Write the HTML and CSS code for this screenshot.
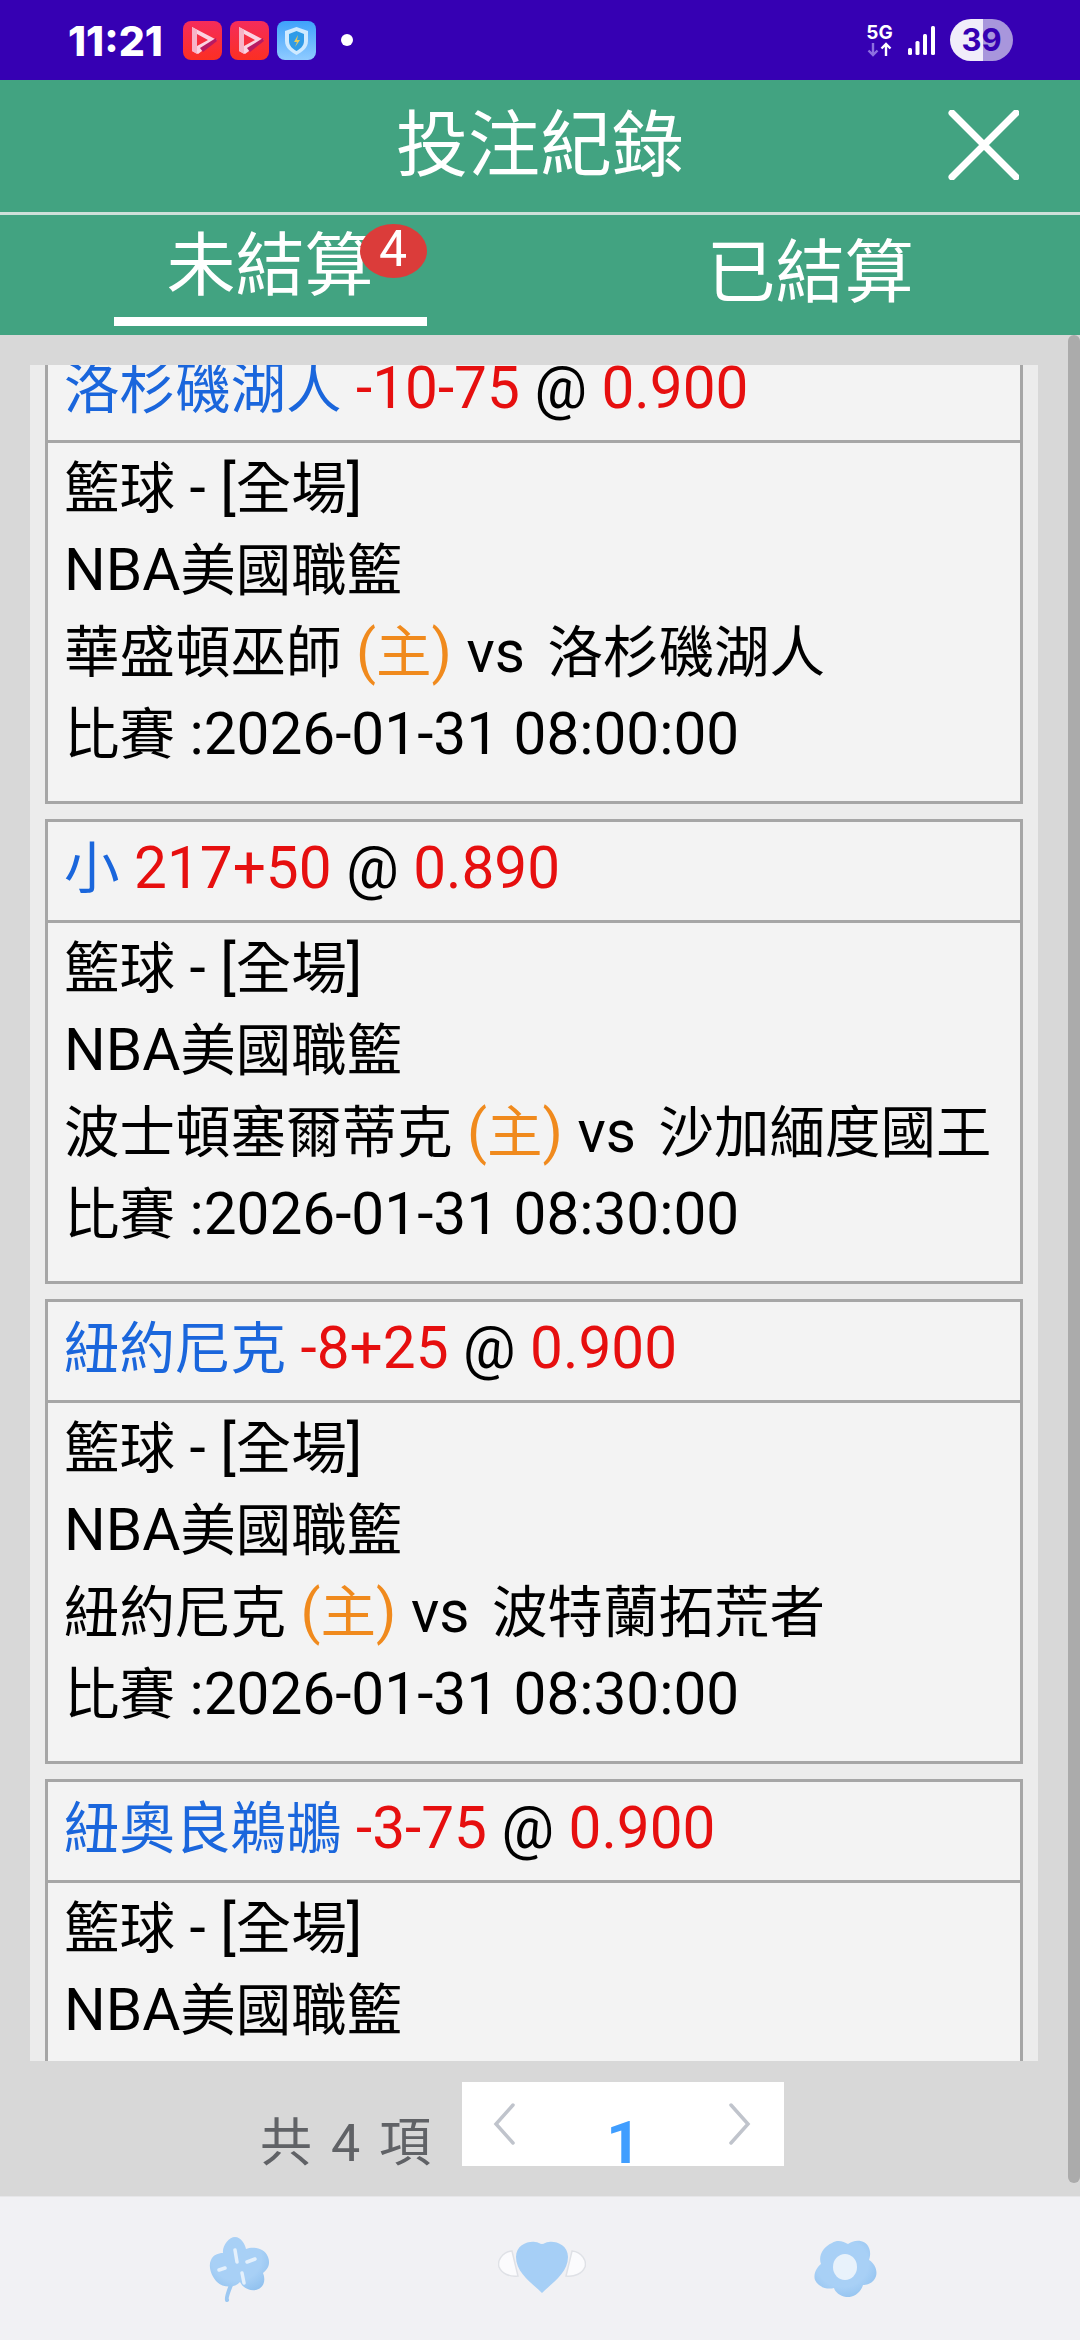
FILE: index.html
```html
<!DOCTYPE html>
<html lang="zh-Hant">
<head>
    <meta charset="UTF-8">
    <meta name="viewport" content="width=device-width, initial-scale=1.0">
    <title>投注紀錄</title>
    <link rel="stylesheet" href="styles.css">
</head>
<body>
<div class="page">
    <!-- 狀態列 -->
    <div class="status">
        <span class="clock">11:21</span>
        <svg class="app" viewBox="0 0 39 39"><defs><linearGradient id="red" x1="0" y1="0" x2="0" y2="1"><stop offset="0" stop-color="#f52c5c"/><stop offset="1" stop-color="#fb2f22"/></linearGradient></defs><rect width="39" height="39" rx="8" fill="url(#red)"/><path fill-rule="evenodd" d="M9 6L34 19L15 33L9 30ZM14 13V25L25 19Z" fill="#fbd3e2"/><path d="M9 6L14 9V33L9 30Z" fill="#f7b4c8"/><path d="M17 27L33 17L34 20L20 31Z" fill="#b81a62"/></svg>
        <svg class="app" viewBox="0 0 39 39"><rect width="39" height="39" rx="8" fill="url(#red)"/><path fill-rule="evenodd" d="M9 6L34 19L15 33L9 30ZM14 13V25L25 19Z" fill="#fbd3e2"/><path d="M9 6L14 9V33L9 30Z" fill="#f7b4c8"/><path d="M17 27L33 17L34 20L20 31Z" fill="#b81a62"/></svg>
        <svg class="app" viewBox="0 0 39 39"><defs><linearGradient id="sky" x1="0" y1="0" x2="0" y2="1"><stop offset="0" stop-color="#3fa2fb"/><stop offset="1" stop-color="#8fcbff"/></linearGradient></defs><rect width="39" height="39" rx="8" fill="url(#sky)"/><path d="M19.500 6L31 10V20C31 27 25 31 19.500 34C14 31 8 27 8 20V10Z" fill="#cfeaff"/><path d="M19.500 10L27 13V20C27 25 23 28 19.500 30C16 28 12 25 12 20V13Z" fill="#2f9be8"/><path d="M21 14L17 21H20L18 26L23 19H20Z" fill="#e8c95a"/></svg>
        <span class="dot"></span>
        <span class="status-right">
            <span class="net">
                <span class="net-label">5G</span>
                <svg class="net-arrows" viewBox="0 0 25 15"><path d="M6 1V13M1.500 8.500L6 13L10.500 8.500" fill="none" stroke="#8d6fe0" stroke-width="2.400"/><path d="M19 14V2M14.500 6.500L19 2L23.500 6.500" fill="none" stroke="#fff" stroke-width="2.400"/></svg>
            </span>
            <svg class="signal" viewBox="0 0 27 29"><rect x="0" y="22" width="4" height="7" rx="1.500"/><rect x="7.500" y="15" width="4" height="14" rx="1.500"/><rect x="15" y="8" width="4" height="21" rx="1.500"/><rect x="23" y="0" width="4" height="29" rx="1.500"/></svg>
            <span class="battery">39</span>
        </span>
    </div>

    <!-- 標題 -->
    <div class="header">
        <h1>投注紀錄</h1>
        <svg class="close" viewBox="0 0 71 70"><path d="M4 3L68 67M68 3L4 67" fill="none" stroke="#fff" stroke-width="7" stroke-linecap="round"/></svg>
    </div>

    <!-- 分頁 -->
    <div class="tabs">
        <div class="tab active">
            <span class="tab-text">未結算<span class="badge">4</span></span>
        </div>
        <div class="tab">
            <span class="tab-text">已結算</span>
        </div>
    </div>

    <div class="main">
        <div class="list">
            <div class="list-inner">
                <div class="card">
                    <div class="card-head"><span class="blue">洛杉磯湖人</span><span class="en"> </span><span class="red">-10-75</span><span class="en"> @ </span><span class="red">0.900</span></div>
                    <div class="card-body">
                        <p>籃球<span class="en"> - [</span>全場<span class="en">]</span></p>
                        <p><span class="en">NBA</span>美國職籃</p>
                        <p>華盛頓巫師<span class="en"> </span><span class="orange"><span class="en">(</span>主<span class="en">)</span></span><span class="en vs"> vs </span>洛杉磯湖人</p>
                        <p>比賽<span class="en"> :2026-01-31 08:00:00</span></p>
                    </div>
                </div>
                <div class="card">
                    <div class="card-head"><span class="blue">小</span><span class="en"> </span><span class="red">217+50</span><span class="en"> @ </span><span class="red">0.890</span></div>
                    <div class="card-body">
                        <p>籃球<span class="en"> - [</span>全場<span class="en">]</span></p>
                        <p><span class="en">NBA</span>美國職籃</p>
                        <p>波士頓塞爾蒂克<span class="en"> </span><span class="orange"><span class="en">(</span>主<span class="en">)</span></span><span class="en vs"> vs </span>沙加緬度國王</p>
                        <p>比賽<span class="en"> :2026-01-31 08:30:00</span></p>
                    </div>
                </div>
                <div class="card">
                    <div class="card-head"><span class="blue">紐約尼克</span><span class="en"> </span><span class="red">-8+25</span><span class="en"> @ </span><span class="red">0.900</span></div>
                    <div class="card-body">
                        <p>籃球<span class="en"> - [</span>全場<span class="en">]</span></p>
                        <p><span class="en">NBA</span>美國職籃</p>
                        <p>紐約尼克<span class="en"> </span><span class="orange"><span class="en">(</span>主<span class="en">)</span></span><span class="en vs"> vs </span>波特蘭拓荒者</p>
                        <p>比賽<span class="en"> :2026-01-31 08:30:00</span></p>
                    </div>
                </div>
                <div class="card">
                    <div class="card-head"><span class="blue">紐奧良鵜鶘</span><span class="en"> </span><span class="red">-3-75</span><span class="en"> @ </span><span class="red">0.900</span></div>
                    <div class="card-body">
                        <p>籃球<span class="en"> - [</span>全場<span class="en">]</span></p>
                        <p><span class="en">NBA</span>美國職籃</p>
                    </div>
                </div>
            </div>
        </div>

        <div class="pager">
            <span class="total">共 4 項</span>
            <div class="pager-box">
                <svg class="chev" viewBox="0 0 22 42"><path d="M20 2L3 21L20 40" fill="none" stroke="#c0c4cc" stroke-width="3.500" stroke-linecap="round"/></svg>
                <span class="num">1</span>
                <svg class="chev" viewBox="0 0 22 42"><path d="M2 2L19 21L2 40" fill="none" stroke="#c0c4cc" stroke-width="3.500" stroke-linecap="round"/></svg>
            </div>
        </div>
        <div class="scrollbar"></div>
    </div>

    <!-- 底部 -->
    <div class="footer">
        <svg class="foot-icon clover" viewBox="0 0 62 66"><defs><radialGradient id="puff" cx="0.450" cy="0.400" r="0.700"><stop offset="0.600" stop-color="#a8d0f6"/><stop offset="1" stop-color="#8fc0ee"/></radialGradient></defs><path d="M18 64C17 62 20 54 22 49" fill="none" stroke="#9cc8f2" stroke-width="4" stroke-linecap="round"/><path d="M26 1C32 1 36 8 37 13C44 10 56 12 59 21C62 29 58 34 54 37C57 44 55 52 47 54C40 55 34 52 31 46C26 52 14 52 8 46C2 40 -1 30 2 24C4 19 9 17 14 17C13 10 20 1 26 1Z" fill="url(#puff)"/><path d="M26 14L28 26M38 26L46 23M16 32L10 34M33 37L35 47" fill="none" stroke="#e4f0fc" stroke-width="3.500" stroke-linecap="round"/></svg>
        <svg class="foot-icon heart" viewBox="0 0 88 52"><path d="M14 10C4 11 -1 20 1 26C4 33 12 36 20 35ZM74 10C84 11 89 20 87 26C84 33 76 36 68 35Z" fill="#fbfbfd" stroke="#dfe1e6" stroke-width="1.500"/><path d="M44 52C34 42 18 32 18 16C18 4 30 0 37 1C40 1 42 3 44 3C46 3 48 1 51 1C58 0 70 4 70 16C70 32 54 42 44 52Z" fill="#a6cff6"/></svg>
        <svg class="foot-icon flower" viewBox="0 0 63 57"><path d="M18 3C24 -1 30 2 34 4C40 -1 52 -1 55 8C57 13 56 17 55 20C62 24 65 34 60 40C57 44 52 45 49 45C47 52 40 58 32 57C26 56 21 52 20 48C13 50 4 47 1 40C-1 34 3 27 7 24C4 16 9 7 18 3Z" fill="url(#puff)"/><ellipse cx="31" cy="27" rx="12" ry="13" fill="#e8f2fb"/></svg>
    </div>
</div>
</body>
</html>
```
FILE: styles.css
```css
*{
    padding: 0;
    margin: 0;
    box-sizing: border-box;
}
body{
    width: 1080px;
    height: 2340px;
    overflow: hidden;
    font-family: Roboto, "Noto Sans CJK TC", sans-serif;
    color: black;
}
.page{
    height: 2340px;
    display: flex;
    flex-direction: column;
}

/* 狀態列 */
.status{
    height: 80px;
    flex-shrink: 0;
    background-color: #3600b3;
    display: flex;
    align-items: center;
    padding: 0 67px 0 68px;
    color: white;
}
.clock{
    font-family: Inter, sans-serif;
    font-size: 41px;
    font-weight: 800;
    width: 115px;
    margin-top: 1px;
    white-space: nowrap;
}
.app{
    width: 39px;
    height: 39px;
    margin-right: 8px;
}
.dot{
    width: 12px;
    height: 12px;
    border-radius: 50%;
    background-color: white;
    margin-left: 17px;
}
.status-right{
    margin-left: auto;
    display: flex;
    align-items: center;
}
.net{
    display: flex;
    flex-direction: column;
    align-items: center;
    width: 25px;
}
.net-label{
    font-family: Inter, sans-serif;
    font-size: 19px;
    font-weight: 700;
    line-height: 18px;
}
.net-arrows{
    width: 25px;
    height: 15px;
}
.signal{
    width: 27px;
    height: 29px;
    fill: white;
    margin-left: 16px;
}
.battery{
    width: 63px;
    height: 42px;
    margin-left: 15px;
    border-radius: 21px;
    background: linear-gradient(90deg, #f1edfa 0 52%, #a896dc 52% 100%);
    color: #3600b3;
    font-family: Inter, sans-serif;
    font-size: 31px;
    font-weight: 700;
    line-height: 42px;
    text-align: center;
}

/* 標題 */
.header{
    height: 135px;
    flex-shrink: 0;
    background-color: #42a381;
    border-bottom: 3px solid #cfe0da;
    position: relative;
    display: flex;
    justify-content: center;
    align-items: center;
}
.header h1{
    font-size: 72px;
    font-weight: 400;
    color: white;
    line-height: 132px;
}
.close{
    position: absolute;
    left: 948px;
    top: 30px;
    width: 71px;
    height: 70px;
}

/* 分頁 */
.tabs{
    height: 120px;
    flex-shrink: 0;
    background-color: #42a381;
    display: grid;
    grid-template-columns: 540px 540px;
    color: white;
}
.tab{
    display: flex;
    justify-content: center;
    padding-top: 11px;
}
.tab.active{
    padding-top: 0;
}
.tab-text{
    font-size: 69px;
    line-height: 96px;
    height: 102px;
    padding: 0 53px;
    position: relative;
}
.tab.active .tab-text{
    border-bottom: 9px solid white;
    height: 111px;
    padding-top: 4px;
}
.badge{
    position: absolute;
    right: 0;
    top: 9px;
    width: 67px;
    height: 54px;
    border-radius: 50%;
    background-color: #db3c3a;
    font-size: 50px;
    line-height: 50px;
    text-align: center;
}

/* 內容 */
.main{
    flex: 1;
    background-color: #d8d8d8;
    position: relative;
    padding: 30px 42px 0 30px;
    display: flex;
    flex-direction: column;
}
.list{
    height: 1696px;
    background-color: #ececec;
    overflow: hidden;
    flex-shrink: 0;
}
.list-inner{
    margin-top: -26px;
    padding: 0 15px;
}
.card{
    height: 465px;
    margin-bottom: 15px;
    border: 3px solid #a6a6a6;
    background-color: #f3f3f3;
}
.card-head{
    height: 101px;
    border-bottom: 3px solid #a6a6a6;
    padding-left: 16px;
    font-size: 55.5px;
    line-height: 92px;
    white-space: nowrap;
}
.card-body{
    padding: 5px 0 0 16px;
    font-size: 55.5px;
    line-height: 81px;
    white-space: nowrap;
}
.en, .red{
    font-size: 58.5px;
}
.vs{
    margin-right: 8px;
}
.blue{
    color: #1a66dc;
}
.red{
    color: #e60f0f;
}
.orange{
    color: #f08a1d;
}

/* 頁碼 */
.pager{
    flex: 1;
    display: flex;
    align-items: flex-start;
    padding: 21px 0 0 230px;
}
.total{
    font-size: 52px;
    color: #606266;
    line-height: 84px;
    letter-spacing: 3px;
    margin-top: 20px;
    white-space: nowrap;
}
.pager-box{
    width: 322px;
    height: 84px;
    background-color: white;
    display: flex;
    justify-content: space-between;
    padding: 21px 33px 0 31px;
    position: absolute;
    left: 462px;
}
.chev{
    width: 22px;
    height: 42px;
}
.num{
    color: #409eff;
    font-size: 60px;
    font-weight: 700;
    line-height: 84px;
    height: 63px;
    margin-top: -2px;
    margin-left: 3px;
}
.scrollbar{
    position: absolute;
    right: 0;
    top: 0;
    width: 12px;
    height: 1848px;
    background-color: #ababab;
    border-radius: 6px;
}

/* 底部 */
.footer{
    height: 144px;
    flex-shrink: 0;
    background-color: #f1f1f4;
    border-top: 1px solid #e6e6e8;
    position: relative;
}
.foot-icon{
    position: absolute;
}
.clover{
    left: 209px;
    top: 39px;
    width: 62px;
    height: 66px;
}
.heart{
    left: 498px;
    top: 44px;
    width: 88px;
    height: 52px;
}
.flower{
    left: 814px;
    top: 43px;
    width: 63px;
    height: 57px;
}
```
